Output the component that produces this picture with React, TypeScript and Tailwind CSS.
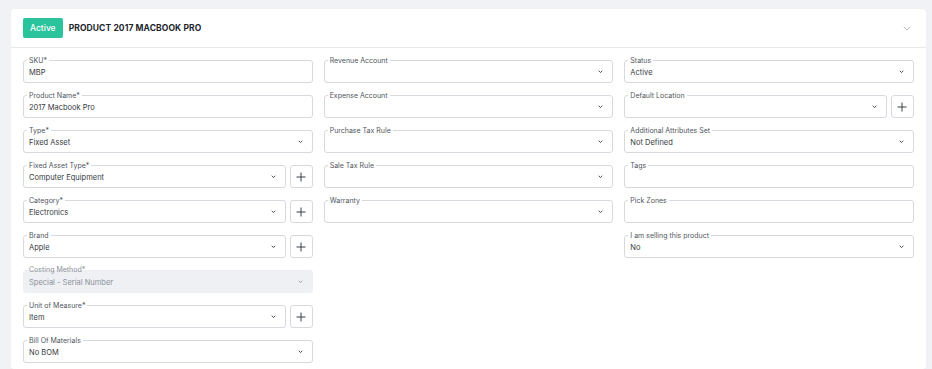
import React from "react";

type FieldProps = {
  label: string;
  value?: string;
  select?: boolean;
  plus?: boolean;
  disabled?: boolean;
};

const Chevron = ({ className }: { className?: string }) => (
  <svg width="5" height="4" viewBox="0 0 5 4" className={className}>
    <path d="M1 1l1.5 1.6L4 1" fill="none" stroke="currentColor" strokeWidth="1" strokeLinecap="round" strokeLinejoin="round" />
  </svg>
);

const PlusButton = () => (
  <button className="w-[23px] h-[23px] shrink-0 flex items-center justify-center border border-[#d6d9de] rounded-[3px] bg-white text-[#3a3f47]">
    <svg width="10" height="10" viewBox="0 0 10 10">
      <path d="M5 0.5v9M0.5 5h9" stroke="currentColor" strokeWidth="1" />
    </svg>
  </button>
);

const Field = ({ label, value, select, plus, disabled }: FieldProps) => {
  return (
    <div className="flex gap-[4px]">
      <div
        className={
          disabled
            ? "relative flex-1 h-[23px] rounded-[3px] bg-[#eef0f3] flex items-center px-[6px]"
            : "relative flex-1 h-[23px] rounded-[3px] border border-[#d6d9de] bg-white flex items-center px-[5px]"
        }
      >
        <span
          className={
            disabled
              ? "absolute left-[5px] top-[-5px] px-[1px] text-[7px] leading-[9px] text-[#8c919a]"
              : "absolute left-[3px] top-[-5px] px-[2px] bg-white text-[7px] leading-[9px] text-[#50555d]"
          }
        >
          {label}
        </span>
        <span className={disabled ? "flex-1 pt-[3px] text-[7.5px] text-[#8c919a]" : "flex-1 pt-[3px] text-[7.5px] text-[#353a41]"}>
          {value}
        </span>
        {select && <Chevron className={disabled ? "text-[#a3a8af] mr-[4px] mt-[1px]" : "text-[#4a5058] mr-[4px] mt-[1px]"} />}
      </div>
      {plus && <PlusButton />}
    </div>
  );
};

export default function App() {
  return (
    <div
      className="h-[369px] bg-[#f1f2f5] pt-[9px] pl-[11px] pr-[6px] overflow-hidden"
      style={{ fontFamily: "Inter, 'Noto Sans', sans-serif" }}
    >
      <div className="bg-white rounded-[4px] h-full">
        <div className="h-[39px] flex items-center px-[12px] border-b border-[#e7e9ed]">
          <span className="h-[20px] px-[7px] flex items-center rounded-[2px] bg-[#29c39c] text-white text-[8.5px] font-medium">
            Active
          </span>
          <span className="ml-[6px] text-[8.5px] font-bold text-[#22262c] tracking-[0.1px]">PRODUCT 2017 MACBOOK PRO</span>
          <svg width="8" height="5" viewBox="0 0 8 5" className="ml-auto mr-[3px] text-[#b4b8bf]">
            <path d="M1 1l3 3 3-3" fill="none" stroke="currentColor" strokeWidth="0.9" strokeLinecap="round" strokeLinejoin="round" />
          </svg>
        </div>
        <div className="grid grid-cols-3 gap-x-[11px] px-[12px] pt-[12px]">
          <div className="flex flex-col gap-[12px]">
            <Field label="SKU*" value="MBP" />
            <Field label="Product Name*" value="2017 Macbook Pro" />
            <Field label="Type*" value="Fixed Asset" select />
            <Field label="Fixed Asset Type*" value="Computer Equipment" select plus />
            <Field label="Category*" value="Electronics" select plus />
            <Field label="Brand" value="Apple" select plus />
            <Field label="Costing Method*" value="Special - Serial Number" select disabled />
            <Field label="Unit of Measure*" value="Item" select plus />
            <Field label="Bill Of Materials" value="No BOM" select />
          </div>
          <div className="flex flex-col gap-[12px]">
            <Field label="Revenue Account" select />
            <Field label="Expense Account" select />
            <Field label="Purchase Tax Rule" select />
            <Field label="Sale Tax Rule" select />
            <Field label="Warranty" select />
          </div>
          <div className="flex flex-col gap-[12px]">
            <Field label="Status" value="Active" select />
            <Field label="Default Location" select plus />
            <Field label="Additional Attributes Set" value="Not Defined" select />
            <Field label="Tags" />
            <Field label="Pick Zones" />
            <Field label="I am selling this product" value="No" select />
          </div>
        </div>
      </div>
    </div>
  );
}
